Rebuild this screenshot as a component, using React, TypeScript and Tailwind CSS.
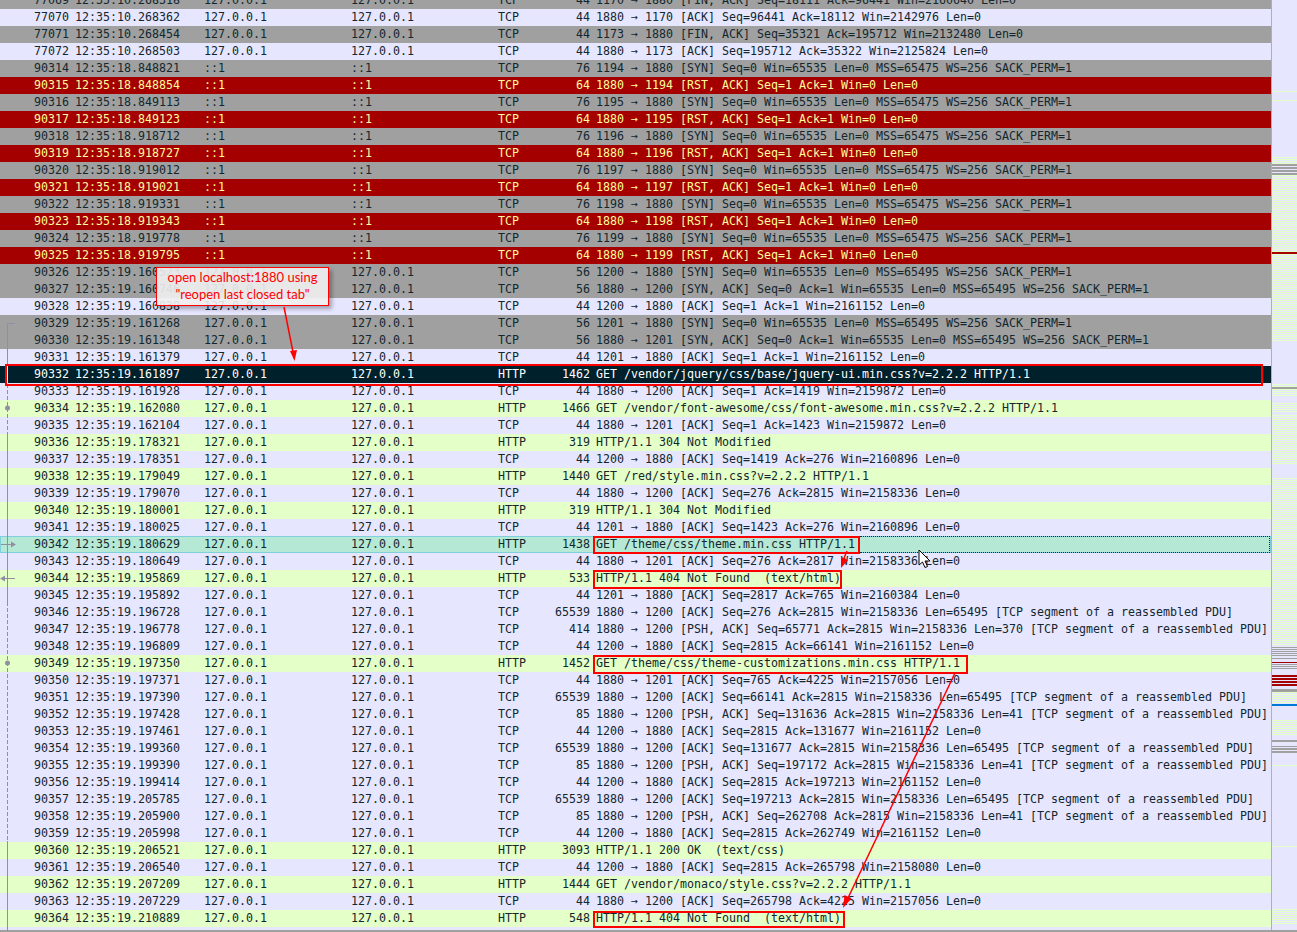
type Kind = "gray" | "red" | "tcp" | "http" | "selected" | "related";

type Packet = [number, string, string, string, string, number, string, Kind];

const LOCAL = "127.0.0.1";
const V6 = "::1";

const PACKETS: Packet[] = [
  [77069, "10.268318", LOCAL, LOCAL, "TCP", 44, "1170 → 1880 [FIN, ACK] Seq=18111 Ack=96441 Win=2160640 Len=0", "gray"],
  [77070, "10.268362", LOCAL, LOCAL, "TCP", 44, "1880 → 1170 [ACK] Seq=96441 Ack=18112 Win=2142976 Len=0", "tcp"],
  [77071, "10.268454", LOCAL, LOCAL, "TCP", 44, "1173 → 1880 [FIN, ACK] Seq=35321 Ack=195712 Win=2132480 Len=0", "gray"],
  [77072, "10.268503", LOCAL, LOCAL, "TCP", 44, "1880 → 1173 [ACK] Seq=195712 Ack=35322 Win=2125824 Len=0", "tcp"],
  [90314, "18.848821", V6, V6, "TCP", 76, "1194 → 1880 [SYN] Seq=0 Win=65535 Len=0 MSS=65475 WS=256 SACK_PERM=1", "gray"],
  [90315, "18.848854", V6, V6, "TCP", 64, "1880 → 1194 [RST, ACK] Seq=1 Ack=1 Win=0 Len=0", "red"],
  [90316, "18.849113", V6, V6, "TCP", 76, "1195 → 1880 [SYN] Seq=0 Win=65535 Len=0 MSS=65475 WS=256 SACK_PERM=1", "gray"],
  [90317, "18.849123", V6, V6, "TCP", 64, "1880 → 1195 [RST, ACK] Seq=1 Ack=1 Win=0 Len=0", "red"],
  [90318, "18.918712", V6, V6, "TCP", 76, "1196 → 1880 [SYN] Seq=0 Win=65535 Len=0 MSS=65475 WS=256 SACK_PERM=1", "gray"],
  [90319, "18.918727", V6, V6, "TCP", 64, "1880 → 1196 [RST, ACK] Seq=1 Ack=1 Win=0 Len=0", "red"],
  [90320, "18.919012", V6, V6, "TCP", 76, "1197 → 1880 [SYN] Seq=0 Win=65535 Len=0 MSS=65475 WS=256 SACK_PERM=1", "gray"],
  [90321, "18.919021", V6, V6, "TCP", 64, "1880 → 1197 [RST, ACK] Seq=1 Ack=1 Win=0 Len=0", "red"],
  [90322, "18.919331", V6, V6, "TCP", 76, "1198 → 1880 [SYN] Seq=0 Win=65535 Len=0 MSS=65475 WS=256 SACK_PERM=1", "gray"],
  [90323, "18.919343", V6, V6, "TCP", 64, "1880 → 1198 [RST, ACK] Seq=1 Ack=1 Win=0 Len=0", "red"],
  [90324, "18.919778", V6, V6, "TCP", 76, "1199 → 1880 [SYN] Seq=0 Win=65535 Len=0 MSS=65475 WS=256 SACK_PERM=1", "gray"],
  [90325, "18.919795", V6, V6, "TCP", 64, "1880 → 1199 [RST, ACK] Seq=1 Ack=1 Win=0 Len=0", "red"],
  [90326, "19.160523", LOCAL, LOCAL, "TCP", 56, "1200 → 1880 [SYN] Seq=0 Win=65535 Len=0 MSS=65495 WS=256 SACK_PERM=1", "gray"],
  [90327, "19.160746", LOCAL, LOCAL, "TCP", 56, "1880 → 1200 [SYN, ACK] Seq=0 Ack=1 Win=65535 Len=0 MSS=65495 WS=256 SACK_PERM=1", "gray"],
  [90328, "19.160838", LOCAL, LOCAL, "TCP", 44, "1200 → 1880 [ACK] Seq=1 Ack=1 Win=2161152 Len=0", "tcp"],
  [90329, "19.161268", LOCAL, LOCAL, "TCP", 56, "1201 → 1880 [SYN] Seq=0 Win=65535 Len=0 MSS=65495 WS=256 SACK_PERM=1", "gray"],
  [90330, "19.161348", LOCAL, LOCAL, "TCP", 56, "1880 → 1201 [SYN, ACK] Seq=0 Ack=1 Win=65535 Len=0 MSS=65495 WS=256 SACK_PERM=1", "gray"],
  [90331, "19.161379", LOCAL, LOCAL, "TCP", 44, "1201 → 1880 [ACK] Seq=1 Ack=1 Win=2161152 Len=0", "tcp"],
  [90332, "19.161897", LOCAL, LOCAL, "HTTP", 1462, "GET /vendor/jquery/css/base/jquery-ui.min.css?v=2.2.2 HTTP/1.1", "selected"],
  [90333, "19.161928", LOCAL, LOCAL, "TCP", 44, "1880 → 1200 [ACK] Seq=1 Ack=1419 Win=2159872 Len=0", "tcp"],
  [90334, "19.162080", LOCAL, LOCAL, "HTTP", 1466, "GET /vendor/font-awesome/css/font-awesome.min.css?v=2.2.2 HTTP/1.1", "http"],
  [90335, "19.162104", LOCAL, LOCAL, "TCP", 44, "1880 → 1201 [ACK] Seq=1 Ack=1423 Win=2159872 Len=0", "tcp"],
  [90336, "19.178321", LOCAL, LOCAL, "HTTP", 319, "HTTP/1.1 304 Not Modified", "http"],
  [90337, "19.178351", LOCAL, LOCAL, "TCP", 44, "1200 → 1880 [ACK] Seq=1419 Ack=276 Win=2160896 Len=0", "tcp"],
  [90338, "19.179049", LOCAL, LOCAL, "HTTP", 1440, "GET /red/style.min.css?v=2.2.2 HTTP/1.1", "http"],
  [90339, "19.179070", LOCAL, LOCAL, "TCP", 44, "1880 → 1200 [ACK] Seq=276 Ack=2815 Win=2158336 Len=0", "tcp"],
  [90340, "19.180001", LOCAL, LOCAL, "HTTP", 319, "HTTP/1.1 304 Not Modified", "http"],
  [90341, "19.180025", LOCAL, LOCAL, "TCP", 44, "1201 → 1880 [ACK] Seq=1423 Ack=276 Win=2160896 Len=0", "tcp"],
  [90342, "19.180629", LOCAL, LOCAL, "HTTP", 1438, "GET /theme/css/theme.min.css HTTP/1.1", "related"],
  [90343, "19.180649", LOCAL, LOCAL, "TCP", 44, "1880 → 1201 [ACK] Seq=276 Ack=2817 Win=2158336 Len=0", "tcp"],
  [90344, "19.195869", LOCAL, LOCAL, "HTTP", 533, "HTTP/1.1 404 Not Found  (text/html)", "http"],
  [90345, "19.195892", LOCAL, LOCAL, "TCP", 44, "1201 → 1880 [ACK] Seq=2817 Ack=765 Win=2160384 Len=0", "tcp"],
  [90346, "19.196728", LOCAL, LOCAL, "TCP", 65539, "1880 → 1200 [ACK] Seq=276 Ack=2815 Win=2158336 Len=65495 [TCP segment of a reassembled PDU]", "tcp"],
  [90347, "19.196778", LOCAL, LOCAL, "TCP", 414, "1880 → 1200 [PSH, ACK] Seq=65771 Ack=2815 Win=2158336 Len=370 [TCP segment of a reassembled PDU]", "tcp"],
  [90348, "19.196809", LOCAL, LOCAL, "TCP", 44, "1200 → 1880 [ACK] Seq=2815 Ack=66141 Win=2161152 Len=0", "tcp"],
  [90349, "19.197350", LOCAL, LOCAL, "HTTP", 1452, "GET /theme/css/theme-customizations.min.css HTTP/1.1", "http"],
  [90350, "19.197371", LOCAL, LOCAL, "TCP", 44, "1880 → 1201 [ACK] Seq=765 Ack=4225 Win=2157056 Len=0", "tcp"],
  [90351, "19.197390", LOCAL, LOCAL, "TCP", 65539, "1880 → 1200 [ACK] Seq=66141 Ack=2815 Win=2158336 Len=65495 [TCP segment of a reassembled PDU]", "tcp"],
  [90352, "19.197428", LOCAL, LOCAL, "TCP", 85, "1880 → 1200 [PSH, ACK] Seq=131636 Ack=2815 Win=2158336 Len=41 [TCP segment of a reassembled PDU]", "tcp"],
  [90353, "19.197461", LOCAL, LOCAL, "TCP", 44, "1200 → 1880 [ACK] Seq=2815 Ack=131677 Win=2161152 Len=0", "tcp"],
  [90354, "19.199360", LOCAL, LOCAL, "TCP", 65539, "1880 → 1200 [ACK] Seq=131677 Ack=2815 Win=2158336 Len=65495 [TCP segment of a reassembled PDU]", "tcp"],
  [90355, "19.199390", LOCAL, LOCAL, "TCP", 85, "1880 → 1200 [PSH, ACK] Seq=197172 Ack=2815 Win=2158336 Len=41 [TCP segment of a reassembled PDU]", "tcp"],
  [90356, "19.199414", LOCAL, LOCAL, "TCP", 44, "1200 → 1880 [ACK] Seq=2815 Ack=197213 Win=2161152 Len=0", "tcp"],
  [90357, "19.205785", LOCAL, LOCAL, "TCP", 65539, "1880 → 1200 [ACK] Seq=197213 Ack=2815 Win=2158336 Len=65495 [TCP segment of a reassembled PDU]", "tcp"],
  [90358, "19.205900", LOCAL, LOCAL, "TCP", 85, "1880 → 1200 [PSH, ACK] Seq=262708 Ack=2815 Win=2158336 Len=41 [TCP segment of a reassembled PDU]", "tcp"],
  [90359, "19.205998", LOCAL, LOCAL, "TCP", 44, "1200 → 1880 [ACK] Seq=2815 Ack=262749 Win=2161152 Len=0", "tcp"],
  [90360, "19.206521", LOCAL, LOCAL, "HTTP", 3093, "HTTP/1.1 200 OK  (text/css)", "http"],
  [90361, "19.206540", LOCAL, LOCAL, "TCP", 44, "1200 → 1880 [ACK] Seq=2815 Ack=265798 Win=2158080 Len=0", "tcp"],
  [90362, "19.207209", LOCAL, LOCAL, "HTTP", 1444, "GET /vendor/monaco/style.css?v=2.2.2 HTTP/1.1", "http"],
  [90363, "19.207229", LOCAL, LOCAL, "TCP", 44, "1880 → 1200 [ACK] Seq=265798 Ack=4225 Win=2157056 Len=0", "tcp"],
  [90364, "19.210889", LOCAL, LOCAL, "HTTP", 548, "HTTP/1.1 404 Not Found  (text/html)", "http"],
  [90365, "19.210912", LOCAL, LOCAL, "TCP", 44, "1201 → 1880 [ACK] Seq=4225 Ack=1254 Win=2159872 Len=0", "tcp"],
];

const ROW_STYLE: Record<Kind, string> = {
  gray: "bg-[#a0a0a0] text-[#12272e]",
  red: "bg-[#a40000] text-[#fffc9c]",
  tcp: "bg-[#e7e6ff] text-[#12272e]",
  http: "bg-[#e4ffc7] text-[#12272e]",
  selected: "bg-[#00202b] text-white",
  related: "bg-[#b5e8d5] text-[#12272e] shadow-[inset_0_0_0_1px_#7fcfdc]",
};

function PacketRow({ p }: { p: Packet }) {
  const [no, time, src, dst, proto, len, info, kind] = p;
  return (
    <div className={`flex h-[17px] shrink-0 items-center whitespace-pre leading-[17px] ${ROW_STYLE[kind]}`}>
      <span className="w-[75px] shrink-0 pl-[34px]">{no}</span>
      <span className="w-[129px] shrink-0">12:35:{time}</span>
      <span className="w-[147px] shrink-0">{src}</span>
      <span className="w-[147px] shrink-0">{dst}</span>
      <span className="w-[50px] shrink-0">{proto}</span>
      <span className="w-[42px] shrink-0 text-right">{len}</span>
      <span className="ml-[6px] min-w-0 flex-1 overflow-hidden">{info}</span>
    </div>
  );
}

// overview strip next to the packet list: y, height, colour
const MAP_BANDS: [number, number, string][] = [
  [91, 1, "#e4ffc7"],
  [100, 1, "#e4ffc7"],
  [164, 2, "#a0a0a0"],
  [167, 2, "#a0a0a0"],
  [170, 2, "#a0a0a0"],
  [173, 2, "#a0a0a0"],
  [252, 2, "#a40000"],
  [387, 2, "#a0a0a0"],
  [647, 1, "#a0a0a0"],
  [649, 1, "#a0a0a0"],
  [651, 1, "#a0a0a0"],
  [653, 1, "#a0a0a0"],
  [655, 1, "#a0a0a0"],
  [658, 1, "#a0a0a0"],
  [662, 1, "#a40000"],
  [664, 1, "#a0a0a0"],
  [666, 1, "#a0a0a0"],
  [668, 1, "#a0a0a0"],
  [675, 2, "#a40000"],
  [678, 2, "#a40000"],
  [681, 2, "#a40000"],
  [684, 2, "#a40000"],
  [689, 3, "#a0a0a0"],
  [704, 2, "#0078d7"],
  [740, 2, "#a0a0a0"],
  [746, 1, "#a0a0a0"],
  [748, 2, "#a0a0a0"],
  [751, 2, "#a0a0a0"],
  [765, 1, "#e4ffc7"],
  [846, 1, "#e4ffc7"],
];

// ranges filled with thin green stripes
const MAP_STRIPES: [number, number][] = [
  [157, 164],
  [175, 252],
  [254, 342],
  [384, 387],
  [389, 396],
  [403, 412],
  [415, 465],
  [478, 645],
  [692, 703],
  [720, 735],
  [909, 925],
];

function Overview() {
  const stripes: number[] = [];
  MAP_STRIPES.forEach(([a, b]) => {
    for (let y = a; y < b; y += 2) stripes.push(y);
  });
  return (
    <svg className="block h-full w-[25px] shrink-0" viewBox="0 0 25 932" preserveAspectRatio="none">
      <rect width="25" height="932" fill="#e7e6ff" />
      {stripes.map((y) => (
        <rect key={y} y={y} width="25" height="1" fill="#e4ffc7" />
      ))}
      {MAP_BANDS.map(([y, h, c]) => (
        <rect key={y} y={y} width="25" height={h} fill={c} />
      ))}
    </svg>
  );
}

function RelatedLine() {
  return (
    <svg className="absolute left-0 top-0" width="32" height="932" fill="none">
      <path d="M15 323.5H7.5V366" stroke="#9090a0" />
      <path d="M7.5 366V383" stroke="#ffffff" />
      <path d="M7.5 384V435" stroke="#9090a0" strokeDasharray="4 2" />
      <path d="M7.5 435V602" stroke="#9090a0" />
      <path d="M7.5 602V841" stroke="#9090a0" strokeDasharray="4 2" />
      <path d="M7.5 841V931" stroke="#9090a0" />
      <circle cx="7.5" cy="408" r="2.5" fill="#9090a0" />
      <circle cx="7.5" cy="663" r="2.5" fill="#9090a0" />
      <path d="M1 544.5H13" stroke="#9090a0" />
      <path d="M16 544.5L11 541.5V547.5Z" fill="#9090a0" />
      <path d="M4 578.5H15" stroke="#9090a0" />
      <path d="M0 578.5L5 575.5V581.5Z" fill="#9090a0" />
    </svg>
  );
}

function Annotations() {
  return (
    <>
      <div className="absolute left-[5px] top-[364px] h-[22px] w-[1258px] border-2 border-[#ff0000]" />
      <div className="absolute left-[860px] top-[536px] h-[17px] w-[410px] border-y border-r border-dotted border-[#12272e]" />
      <div className="absolute left-[593px] top-[536px] h-[18px] w-[267px] border-2 border-[#ff0000]" />
      <div className="absolute left-[593px] top-[570px] h-[19px] w-[249px] border-2 border-[#ff0000]" />
      <div className="absolute left-[593px] top-[655px] h-[19px] w-[375px] border-2 border-[#ff0000]" />
      <div className="absolute left-[593px] top-[911px] h-[17px] w-[252px] border-2 border-[#ff0000]" />
      <div className="absolute left-[156px] top-[267px] flex h-[39px] w-[173px] flex-col items-center border border-[#ff0000] bg-[#f0f0f0]/90 pt-[1px] font-['Lato',sans-serif] text-[13px] leading-[17px] text-[#ff0000] shadow-[3px_3px_4px_rgba(0,0,0,0.3)]">
        <span>open localhost:1880 using</span>
        <span>"reopen last closed tab"</span>
      </div>
      <svg className="pointer-events-none absolute left-0 top-0" width="1297" height="932" fill="none">
        <path d="M284 307L293 352" stroke="#ff0000" strokeWidth="1.5" />
        <path d="M294.5 361L290 351L297 350Z" fill="#ff0000" />
        <path d="M847 551L844 558" stroke="#ff0000" strokeWidth="1.5" />
        <path d="M841 568L841 557L848 560Z" fill="#ff0000" />
        <path d="M955 673L848 898" stroke="#ff0000" strokeWidth="1.5" />
        <path d="M843 908L844.5 895L851.5 898.5Z" fill="#ff0000" />
        {/* mouse pointer */}
        <path d="M919 550V565L922.5 562L925 567.5L927.5 566.5L925 561H930Z" fill="#ffffff" stroke="#000000" />
      </svg>
    </>
  );
}

export default function App() {
  return (
    <div className="relative flex h-[932px] w-[1297px] overflow-hidden bg-[#e7e6ff] font-['DejaVu_Sans_Mono',monospace] text-[11.63px]">
      <div className="mt-[-8px] flex w-[1271px] shrink-0 flex-col">
        {PACKETS.map((p) => (
          <PacketRow key={p[0]} p={p} />
        ))}
      </div>
      <div className="w-px shrink-0 bg-[#b0b0b0]" />
      <Overview />
      <div className="absolute inset-x-0 bottom-0 h-[2px] bg-[#a0a0a0]" />
      <RelatedLine />
      <Annotations />
    </div>
  );
}
